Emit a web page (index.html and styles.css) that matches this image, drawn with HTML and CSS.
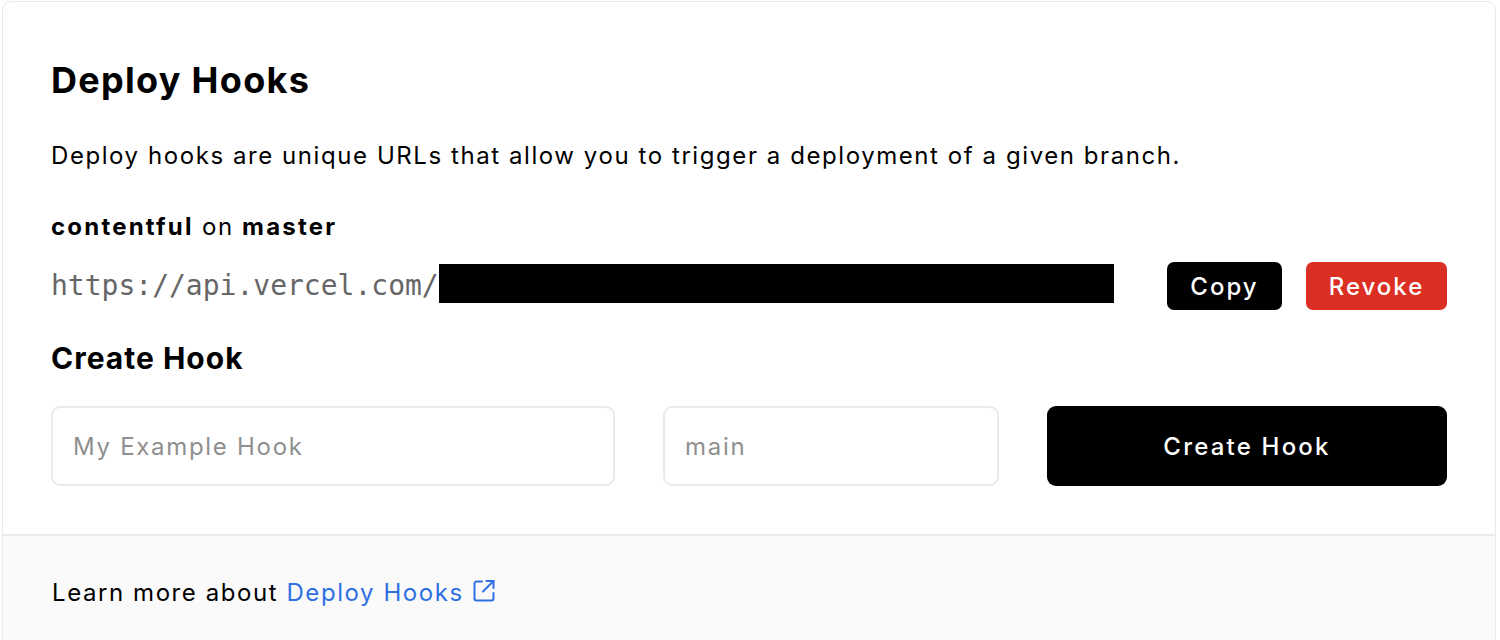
FILE: index.html
```html
<!DOCTYPE html>
<html lang="en">
<head>
<meta charset="utf-8">
<title>Deploy Hooks</title>
<link rel="stylesheet" href="styles.css">
</head>
<body>
<section class="card">
  <div class="card-body">
    <h2 class="title">Deploy Hooks</h2>
    <p class="desc">Deploy hooks are unique URLs that allow you to trigger a deployment of a given branch.</p>
    <div class="hook-name"><strong>contentful</strong> on <strong>master</strong></div>
    <div class="hook-row">
      <div class="url"><span class="url-text">https://api.vercel.com/</span><span class="redact"></span></div>
      <div class="hook-actions">
        <button class="btn btn-dark">Copy</button>
        <button class="btn btn-red">Revoke</button>
      </div>
    </div>
    <h3 class="subtitle">Create Hook</h3>
    <div class="create-row">
      <input class="field" type="text" placeholder="My Example Hook">
      <input class="field" type="text" placeholder="main">
      <button class="btn-create">Create Hook</button>
    </div>
  </div>
  <footer class="card-footer">
    Learn more about <a class="link" href="#">Deploy Hooks <svg class="ext" width="24" height="24" viewBox="0 0 24 24" fill="none" stroke="currentColor" stroke-width="2" stroke-linecap="round" stroke-linejoin="round"><path d="M10 2.5H4.5a2 2 0 0 0-2 2v15a2 2 0 0 0 2 2h15a2 2 0 0 0 2-2V14"/><path d="M14.5 2h7v7"/><path d="M21.5 2L11 12.5"/></svg></a>
  </footer>
</section>
</body>
</html>
```
FILE: styles.css
```css
* { box-sizing: border-box; }
html, body { margin: 0; padding: 0; background: #fff; }
body {
  font-family: Inter, "Noto Sans", "Liberation Sans", sans-serif;
  color: #000;
  padding: 1px 4px 0 2px;
}
.card {
  border: 1px solid #eaeaea;
  border-radius: 9px;
  overflow: hidden;
  background: #fff;
  min-height: 700px;
}
.card-body {
  padding: 51px 48px 48px 48px;
}
.title {
  margin: 0;
  font-size: 36px;
  line-height: 54px;
  font-weight: 700;
  letter-spacing: 1.3px;
}
.desc {
  margin: 31px 0 0 0;
  font-size: 24px;
  line-height: 36px;
  letter-spacing: 1.57px;
}
.hook-name {
  margin-top: 35px;
  font-size: 24px;
  line-height: 36px;
  letter-spacing: 1.6px;
}
.hook-name strong { font-weight: 700; letter-spacing: 2.2px; }
.hook-row {
  margin-top: 17px;
  display: flex;
  align-items: center;
  justify-content: space-between;
  height: 48px;
}
.url {
  display: flex;
  align-items: center;
}
.url-text {
  font-family: "DejaVu Sans Mono", "Liberation Mono", monospace;
  font-size: 28px;
  color: #666;
  line-height: 36px;
}
.redact {
  display: inline-block;
  width: 675px;
  height: 39px;
  background: #000;
  margin-bottom: 5px;
}
.hook-actions {
  display: flex;
  gap: 24px;
}
.btn {
  font-family: inherit;
  font-size: 24px;
  font-weight: 500;
  letter-spacing: 2px;
  color: #fff;
  border: none;
  border-radius: 7px;
  height: 48px;
  padding: 0;
  cursor: pointer;
}
.btn-dark { background: #000; width: 115px; }
.btn-red { background: #da2f22; width: 141px; }
.subtitle {
  margin: 26px 0 0 0;
  font-size: 30px;
  line-height: 45px;
  font-weight: 700;
  letter-spacing: 1px;
}
.create-row {
  margin-top: 25px;
  display: grid;
  grid-template-columns: 564px 336px 1fr;
  gap: 48px;
  height: 80px;
}
.field {
  height: 80px;
  border: 2px solid #eaeaea;
  border-radius: 9px;
  padding: 0 20px;
  font-family: inherit;
  font-size: 24px;
  letter-spacing: 1.7px;
  color: #000;
  background: #fff;
  outline: none;
}
.field::placeholder { color: #8f8f8f; }
.btn-create {
  height: 80px;
  background: #000;
  color: #fff;
  border: none;
  border-radius: 9px;
  font-family: inherit;
  font-size: 24px;
  font-weight: 500;
  letter-spacing: 2.2px;
  cursor: pointer;
}
.card-footer {
  border-top: 2px solid #eaeaea;
  background: #fafafa;
  padding: 39px 48px 60px 49px;
  font-size: 24px;
  line-height: 36px;
  letter-spacing: 1.57px;
  min-height: 200px;
}
.link {
  color: #2f6fe4;
  text-decoration: none;
}
.ext {
  vertical-align: -2px;
  margin-left: 0;
}
```
